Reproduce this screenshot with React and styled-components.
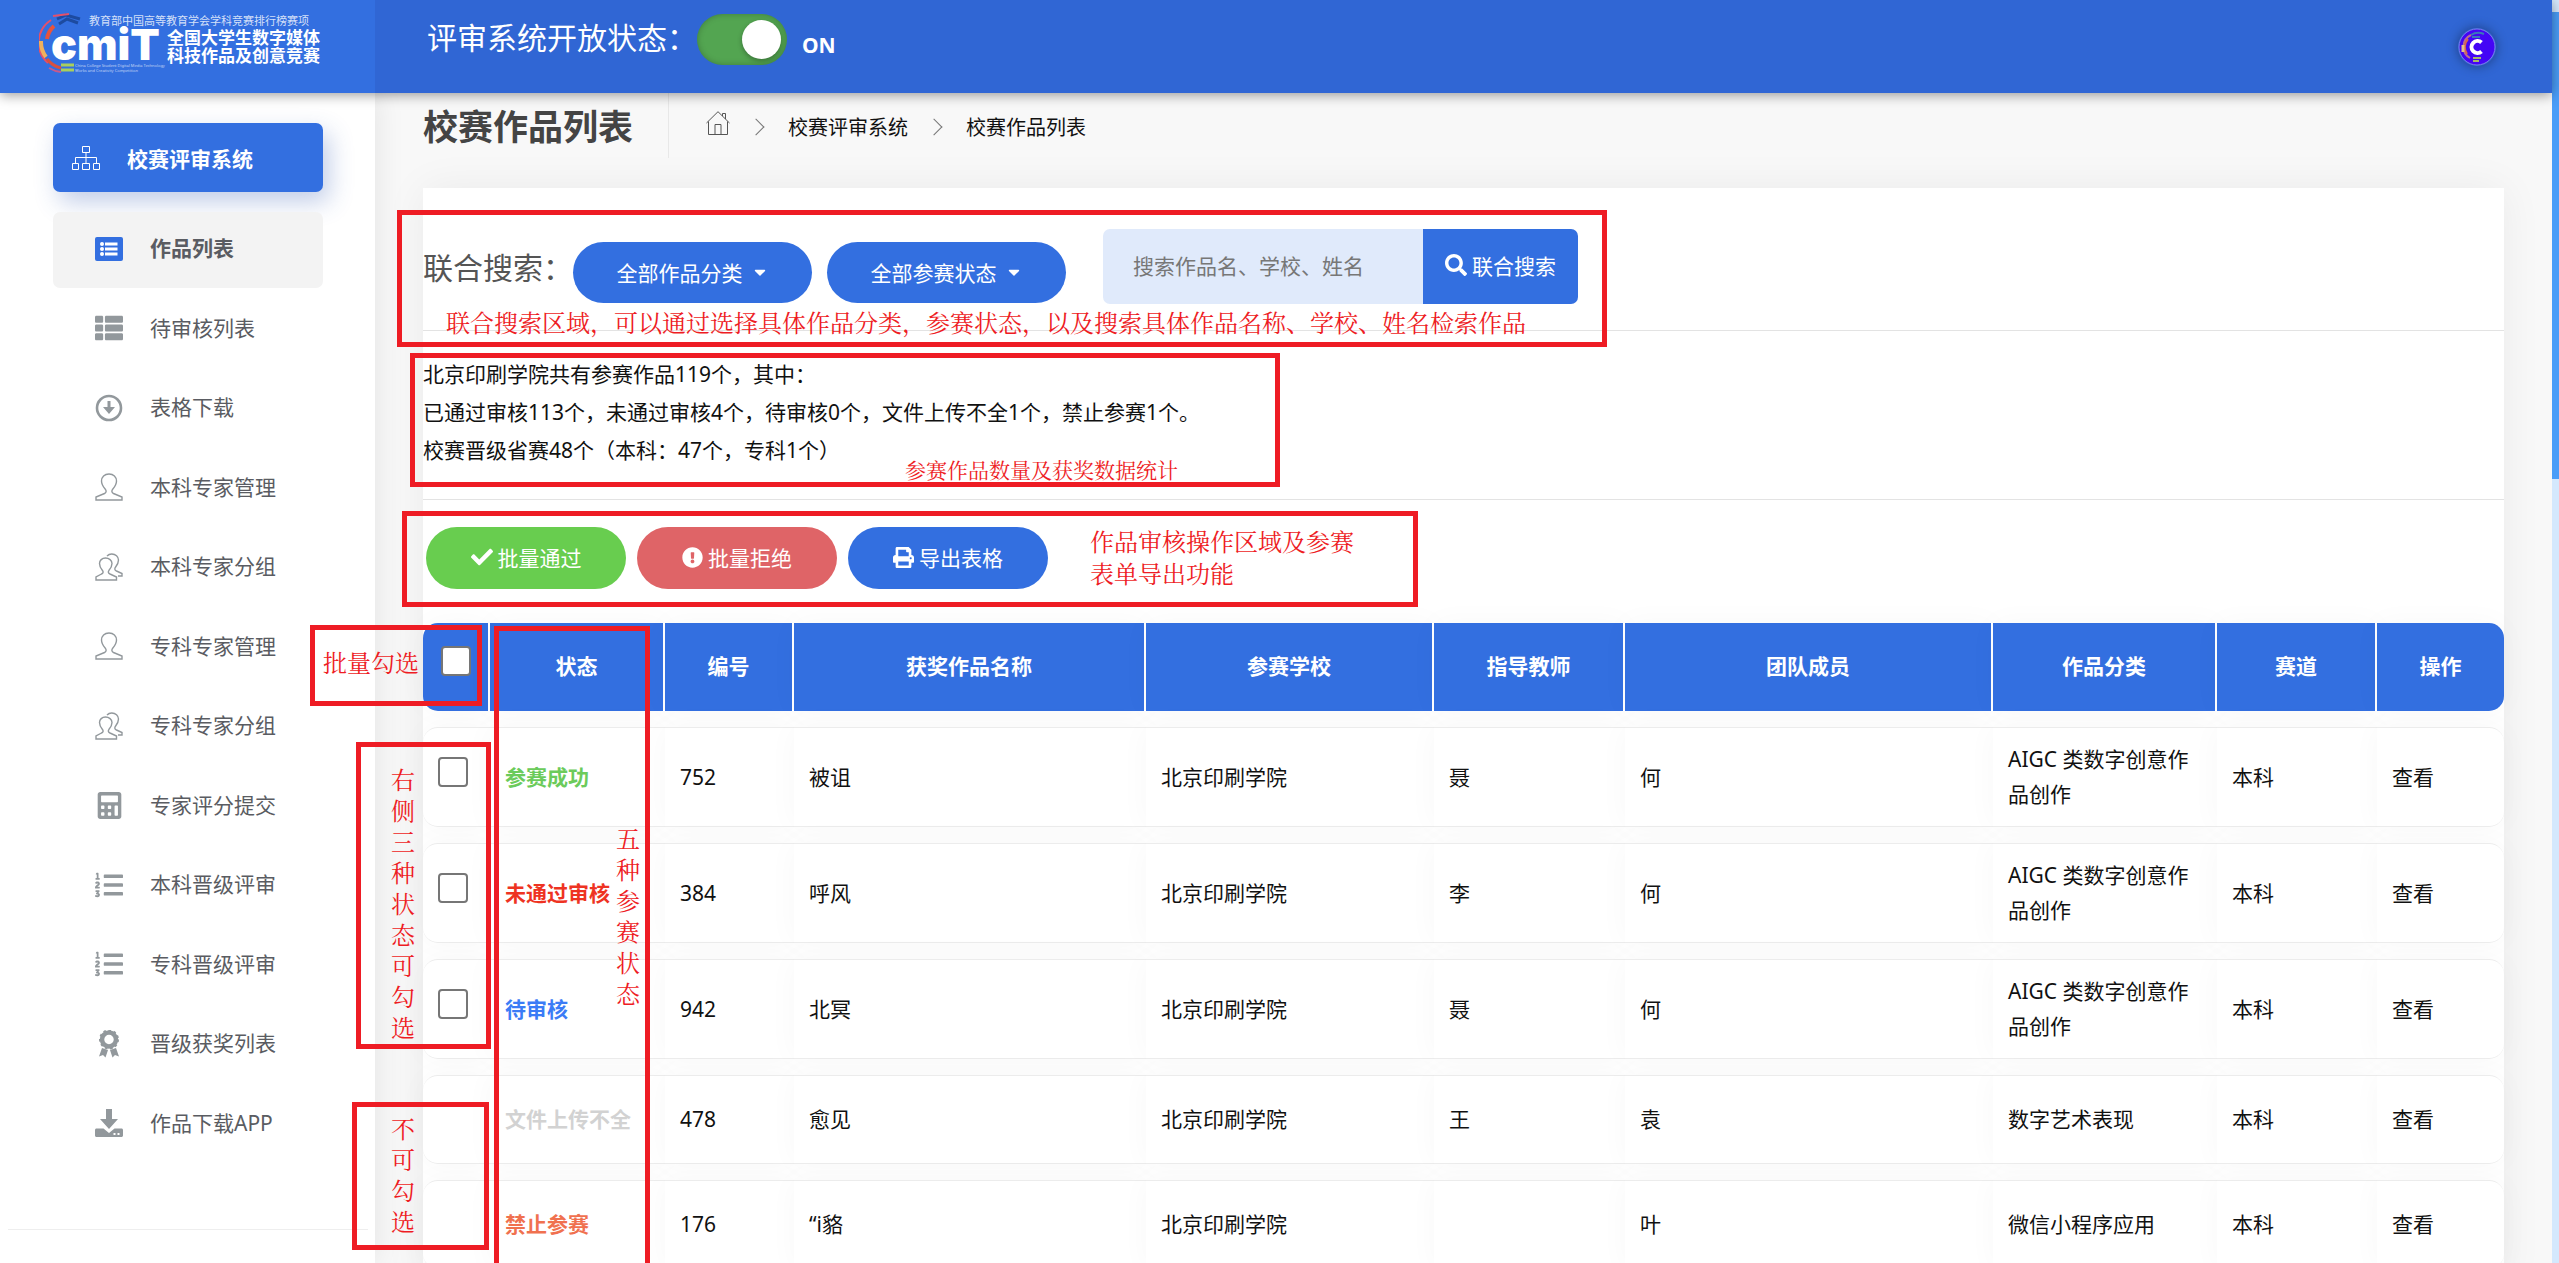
import React, { useState } from 'react';
import styled, { createGlobalStyle } from 'styled-components';
import {
  FaCalculator,
  FaCaretDown,
  FaCheck,
  FaExclamationCircle,
  FaListOl,
  FaPrint,
  FaSearch,
  FaThList,
} from 'react-icons/fa';

const menus = [
  { label: '作品列表', icon: 'listAlt' },
  { label: '待审核列表', icon: 'thList' },
  { label: '表格下载', icon: 'circleDown' },
  { label: '本科专家管理', icon: 'user' },
  { label: '本科专家分组', icon: 'users' },
  { label: '专科专家管理', icon: 'user' },
  { label: '专科专家分组', icon: 'users' },
  { label: '专家评分提交', icon: 'calculator' },
  { label: '本科晋级评审', icon: 'listOl' },
  { label: '专科晋级评审', icon: 'listOl' },
  { label: '晋级获奖列表', icon: 'award' },
  { label: '作品下载APP', icon: 'download' },
];

const columns = [
  { title: '状态', width: 175 },
  { title: '编号', width: 129 },
  { title: '获奖作品名称' },
  { title: '参赛学校', width: 288 },
  { title: '指导教师', width: 191 },
  { title: '团队成员', width: 368 },
  { title: '作品分类', width: 224 },
  { title: '赛道', width: 160 },
  { title: '操作', width: 127 },
];

const works = [
  {
    id: 752,
    status: '参赛成功',
    color: '#6bcb5b',
    name: '被诅',
    teacher: '聂',
    team: '何',
    category: 'AIGC 类数字创意作品创作',
    selectable: true,
  },
  {
    id: 384,
    status: '未通过审核',
    color: '#ee3322',
    name: '呼风',
    teacher: '李',
    team: '何',
    category: 'AIGC 类数字创意作品创作',
    selectable: true,
  },
  {
    id: 942,
    status: '待审核',
    color: '#3b7cf6',
    name: '北冥',
    teacher: '聂',
    team: '何',
    category: 'AIGC 类数字创意作品创作',
    selectable: true,
  },
  {
    id: 478,
    status: '文件上传不全',
    color: '#d2d2d2',
    name: '愈见',
    teacher: '王',
    team: '袁',
    category: '数字艺术表现',
  },
  {
    id: 176,
    status: '禁止参赛',
    color: '#f0714f',
    name: '“i貉',
    teacher: '',
    team: '叶',
    category: '微信小程序应用',
  },
];

const frames = [
  { left: 397, top: 210, width: 1210, height: 137 },
  { left: 410, top: 353, width: 870, height: 134 },
  { left: 402, top: 511, width: 1016, height: 96 },
  { left: 310, top: 625, width: 172, height: 81 },
  { left: 494, top: 626, width: 156, height: 700 },
  { left: 356, top: 742, width: 135, height: 307 },
  { left: 352, top: 1102, width: 137, height: 148 },
];

const notes = [
  {
    left: 446,
    top: 306,
    text: '联合搜索区域，可以通过选择具体作品分类，参赛状态，以及搜索具体作品名称、学校、姓名检索作品',
  },
  { left: 905, top: 453, small: true, text: '参赛作品数量及获奖数据统计' },
  { left: 1090, top: 525, width: 270, text: '作品审核操作区域及参赛表单导出功能' },
  { left: 323, top: 646, text: '批量勾选' },
  { left: 391, top: 763, width: 24, text: '右侧三种状态可勾选' },
  { left: 616, top: 822, width: 24, text: '五种参赛状态' },
  { left: 391, top: 1112, width: 24, text: '不可勾选' },
];

const Icon = ({ name }) => {
  const line = { fill: 'none', stroke: 'currentColor', strokeWidth: 1.4 };
  switch (name) {
    case 'listAlt':
      return (
        <svg width="28" height="24" viewBox="0 0 28 24" fill="#336fe0">
          <rect width="28" height="24" rx="2" />
          <g fill="#fff">
            <circle cx="7" cy="7" r="2" />
            <circle cx="7" cy="12" r="2" />
            <circle cx="7" cy="17" r="2" />
            <path d="M10 5.500h12.500v3H10zM10 10.500h12.500v3H10zM10 15.500h12.500v3H10z" />
          </g>
        </svg>
      );
    case 'thList':
      return <FaThList size={28} />;
    case 'circleDown':
      return (
        <svg width="28" height="28" viewBox="0 0 28 28" fill="currentColor">
          <circle {...line} strokeWidth="2.6" cx="14" cy="14" r="12" />
          <path d="M12.500 7h3v6h4.500l-6 7-6-7h4.500z" />
        </svg>
      );
    case 'user':
      return (
        <svg width="28" height="28" viewBox="0 0 28 28" {...line}>
          <path d="M1 27v-3l8.500-3.500c2-1 2-2.500.8-4.300C8 13.500 6.500 11 6.500 8c0-4 3-7 7.500-7s7.500 3 7.500 7c0 3-1.500 5.500-3.800 8.200-1.200 1.800-1.200 3.300.8 4.300L27 24v3z" />
        </svg>
      );
    case 'users':
      return (
        <svg width="28" height="28" viewBox="0 0 28 28" {...line}>
          <path d="M1 27v-3l5.500-3c2-1 2-2.200.8-3.700C5.500 15 4.500 13 4.500 10.500 4.500 7.500 7 5 10.500 5s6.500 2.500 6.500 5.500c0 2.500-1 4.500-3 6.800-1 1.500-1 2.700 1 3.700l6.500 3v3z" />
          <path d="M12 3c1.200-1.300 3-2 4.800-2C20.500 1 23.500 3.600 23.500 7c0 2.800-1.200 5-3 7.200-1 1.500-1 2.800 1 3.800l5.500 2.500V23H23" />
        </svg>
      );
    case 'calculator':
      return <FaCalculator size={27} />;
    case 'listOl':
      return <FaListOl size={28} />;
    case 'award':
      return (
        <svg width="22" height="28" viewBox="0 0 22 28" fill="currentColor">
          <circle {...line} strokeWidth="4.500" cx="11" cy="9.500" r="7" />
          <circle
            {...line}
            strokeWidth="2"
            strokeDasharray="2.600 2.600"
            cx="11"
            cy="9.500"
            r="9"
          />
          <path d="M4 18l6 2-2.500 7.500-2.500-2.500L1 26.500zM18 18l-6 2 2.500 7.500 2.500-2.500 4 1.500z" />
        </svg>
      );
    default:
      return (
        <svg width="28" height="28" viewBox="0 0 28 28" fill="currentColor">
          <path d="M11 0h6v10h6l-9 10-9-10h6z" />
          <path
            fillRule="evenodd"
            d="M1.500 19.500h7l5.500 4.500 5.500-4.500h7c.8 0 1.500.7 1.500 1.500v5.500c0 .8-.7 1.500-1.500 1.500h-25C.7 28 0 27.300 0 26.500V21c0-.8.7-1.500 1.500-1.500zM18.500 24v2h2v-2zM22.500 24v2h2v-2z"
          />
        </svg>
      );
  }
};

const Logo = () => (
  <svg width="284" height="62" viewBox="0 0 284 62" role="img">
    <g fill="none">
      <path d="M12 7A27 27 0 0 0 9 50" stroke="#e4506a" strokeWidth="2" />
      <path d="M15 13A22 22 0 0 0 8 26" stroke="#e8543c" strokeWidth="4" />
      <path d="M2 28A25 25 0 0 0 7 44" stroke="#f0b15c" strokeWidth="4" />
      <path d="M8 46A24 24 0 0 0 22 55" stroke="#d9503f" strokeWidth="3" />
      <path d="M10 55A29 29 0 0 0 22 59" stroke="#c85a8a" strokeWidth="2" />
      <path d="M18 6l9-4 14 4M20 11l8-5 11 4" stroke="#1d4ba0" strokeWidth="3" />
      <path d="M22 52h13M22 57h13" stroke="#a9cf5c" strokeWidth="3" />
      <path d="M14 3L30 1" stroke="#e4506a" strokeWidth="2" />
    </g>
    <g fill="#fff">
      <text x="12" y="47" fontFamily="Inter" fontWeight="900" fontSize="43">
        cmiT
      </text>
      <text x="50" y="12" fontSize="11" fillOpacity="0.8">
        教育部中国高等教育学会学科竞赛排行榜赛项
      </text>
      <text x="128" y="31" fontWeight="700" fontSize="17">
        全国大学生数字媒体
      </text>
      <text x="128" y="49" fontWeight="700" fontSize="17">
        科技作品及创意竞赛
      </text>
      <g fontSize="4" fillOpacity="0.7">
        <text x="36" y="54">China College Student Digital Media Technology</text>
        <text x="36" y="59">Works and Creativity Competition</text>
      </g>
    </g>
  </svg>
);

const App = () => {
  const [isOpen, setIsOpen] = useState(true);

  return (
    <Screen>
      <GlobalStyle />
      <Page>
        <Header>
          <Brand href="#">
            <Logo />
          </Brand>
          <HeaderBar>
            <SwitchLabel>
              评审系统开放状态：
              <Switch
                type="checkbox"
                checked={isOpen}
                onChange={() => setIsOpen(!isOpen)}
              />
            </SwitchLabel>
            <SwitchState>{isOpen ? 'ON' : 'OFF'}</SwitchState>
            <Avatar type="button" aria-label="账户">
              <svg width="38" height="38" viewBox="0 0 38 38" fill="none">
                <circle cx="19" cy="19" r="18" fill="#4405f5" stroke="#7a7fe8" />
                <path d="M13 7A13 13 0 0 0 12 30" stroke="#b9708f" strokeWidth="2" />
                <path d="M10 11A12 12 0 0 0 9 26" stroke="#d8664f" strokeWidth="2" />
                <path d="M5 17v7" stroke="#e0c08a" strokeWidth="3" />
                <path d="M13 7q6-4 13-1M14 9h8" stroke="#3a78b8" strokeWidth="2" />
                <path d="M15 30h8M15 33h6" stroke="#a5b86a" strokeWidth="2" />
                <path d="M23.500 14.500A6 6 0 1 0 23.500 23.500" stroke="#fff" strokeWidth="4" />
              </svg>
            </Avatar>
          </HeaderBar>
        </Header>

        <Body>
          <Sidebar>
            <SystemLink href="#">
              <svg
                width="28"
                height="26"
                viewBox="0 0 28 26"
                fill="none"
                stroke="currentColor"
              >
                <path d="M10.500 1.500h7v6h-7zM.5 18.500h6v6h-6zM10.500 18.500h7v6h-7zM21.500 18.500h6v6h-6zM14 7.500v11M3.500 18.500v-6h21v6" />
              </svg>
              校赛评审系统
            </SystemLink>
            <Menu>
              {menus.map(({ label, icon }, i) => (
                <li key={label}>
                  <MenuLink href="#" $active={i === 0}>
                    <MenuIcon>
                      <Icon name={icon} />
                    </MenuIcon>
                    {label}
                  </MenuLink>
                </li>
              ))}
            </Menu>
          </Sidebar>

          <Main>
            <TitleBar>
              <Title>校赛作品列表</Title>
              <Breadcrumb>
                <a href="#" aria-label="首页">
                  <svg
                    width="24"
                    height="25"
                    viewBox="0 0 24 25"
                    fill="none"
                    stroke="#555"
                  >
                    <path d="M.5 12L12 .7 23.500 12M2.500 10.500v13h19v-13M9 23.500v-10h6v10M16.500 5V2.500h3v5.500" />
                  </svg>
                </a>
                <Chevron />
                <a href="#">校赛评审系统</a>
                <Chevron />
                <a href="#">校赛作品列表</a>
              </Breadcrumb>
            </TitleBar>

            <Panel>
              <SearchRow>
                <SearchTitle>联合搜索：</SearchTitle>
                <PillGroup>
                  <Pill type="button">
                    全部作品分类
                    <FaCaretDown size={18} />
                  </Pill>
                  <Pill type="button">
                    全部参赛状态
                    <FaCaretDown size={18} />
                  </Pill>
                </PillGroup>
                <SearchInput
                  type="text"
                  aria-label="联合搜索"
                  placeholder="搜索作品名、学校、姓名"
                />
                <SearchButton type="button">
                  <FaSearch size={22} />
                  联合搜索
                </SearchButton>
              </SearchRow>

              <Summary>
                <p>北京印刷学院共有参赛作品119个，其中：</p>
                <p>
                  已通过审核113个，未通过审核4个，待审核0个，文件上传不全1个，禁止参赛1个。
                </p>
                <p>校赛晋级省赛48个（本科：47个，专科1个）</p>
              </Summary>

              <Actions>
                <ActionButton type="button" $color="#68cd4f">
                  <FaCheck size={22} />
                  批量通过
                </ActionButton>
                <ActionButton type="button" $color="#df6467">
                  <FaExclamationCircle size={21} />
                  批量拒绝
                </ActionButton>
                <ActionButton type="button" $color="#336fe0">
                  <FaPrint size={21} />
                  导出表格
                </ActionButton>
              </Actions>

              <Table>
                <colgroup>
                  <Col $width={67} />
                  {columns.map(({ title, width }) => (
                    <Col key={title} $width={width} />
                  ))}
                </colgroup>
                <thead>
                  <tr>
                    <th>
                      <Checkbox type="checkbox" aria-label="批量勾选" />
                    </th>
                    {columns.map(({ title }) => (
                      <th key={title}>{title}</th>
                    ))}
                  </tr>
                </thead>
                <tbody>
                  {works.map((work) => (
                    <tr key={work.id}>
                      <td>
                        {work.selectable && (
                          <Checkbox type="checkbox" aria-label={work.name} />
                        )}
                      </td>
                      <td>
                        <Status $color={work.color}>{work.status}</Status>
                      </td>
                      <td>{work.id}</td>
                      <td>{work.name}</td>
                      <td>北京印刷学院</td>
                      <td>{work.teacher}</td>
                      <td>{work.team}</td>
                      <td>{work.category}</td>
                      <td>本科</td>
                      <td>
                        <a href="#">查看</a>
                      </td>
                    </tr>
                  ))}
                </tbody>
              </Table>
            </Panel>
          </Main>
        </Body>
      </Page>
      <ScrollTrack>
        <ScrollThumb />
      </ScrollTrack>

      {frames.map((frame) => (
        <Frame key={`${frame.left}-${frame.top}`} {...toPlace(frame)} />
      ))}
      {notes.map((note) => (
        <Note key={note.text} {...toPlace(note)} $small={note.small}>
          {note.text}
        </Note>
      ))}
    </Screen>
  );
};

const toPlace = ({ left, top, width, height }) => ({
  $left: left,
  $top: top,
  $width: width,
  $height: height,
});

const GlobalStyle = createGlobalStyle`
  * {
    box-sizing: border-box;
  }

  body {
    margin: 0;
    background: #f8f8f8;
    color: #111;
    font-family: 'Noto Sans', 'Noto Sans CJK SC', sans-serif;
    font-size: 21px;
    font-weight: 400;
  }

  button,
  input {
    font: inherit;
  }

  a {
    color: inherit;
    text-decoration: none;
  }
`;

const Screen = styled.div`
  position: relative;
  display: flex;
  height: 100vh;
  overflow: hidden;
`;

const Page = styled.div`
  flex: 1;
  display: flex;
  flex-direction: column;
  min-width: 0;
`;

const Header = styled.header`
  position: relative;
  z-index: 2;
  display: flex;
  flex: none;
  height: 93px;
  color: #fff;
  box-shadow: 0 2px 12px rgba(0, 0, 0, 0.4);
`;

const Brand = styled.a`
  flex: none;
  width: 375px;
  padding: 13px 0 0 39px;
  background: #336fe0;
`;

const HeaderBar = styled.div`
  flex: 1;
  display: flex;
  align-items: flex-start;
  padding: 14px 56px 0 52px;
  background: #3066d4;
`;

const SwitchLabel = styled.label`
  display: flex;
  align-items: flex-start;
  font-size: 30px;
  line-height: 48px;
`;

const Switch = styled.input`
  appearance: none;
  width: 90px;
  height: 51px;
  margin: 0;
  padding: 6px;
  border-radius: 26px;
  background: #53a551;
  box-shadow: inset 0 0 6px rgba(0, 0, 0, 0.25);

  &::before {
    content: '';
    display: block;
    width: 39px;
    height: 39px;
    margin-left: ${({ checked }) => (checked ? '39px' : '0')};
    border-radius: 50%;
    background: #fff;
    box-shadow: 0 2px 5px rgba(0, 0, 0, 0.3);
  }
`;

const SwitchState = styled.span`
  margin: 16px 0 0 15px;
  font-weight: 700;
  line-height: 30px;
`;

const Avatar = styled.button`
  display: flex;
  margin: 14px 0 0 auto;
  padding: 0;
  border: 0;
  border-radius: 50%;
  background: none;
  box-shadow: 0 0 12px rgba(0, 0, 0, 0.4);
`;

const Body = styled.div`
  flex: 1;
  display: flex;
  min-height: 0;
`;

const Sidebar = styled.aside`
  flex: none;
  width: 375px;
  padding: 30px 52px 0 53px;
  background: #fff;
  box-shadow: 0 0 30px rgba(0, 0, 0, 0.09);
`;

const SystemLink = styled.a`
  display: flex;
  align-items: center;
  gap: 27px;
  height: 69px;
  margin-bottom: 20px;
  padding-left: 19px;
  border-radius: 7px;
  background: #336fe0;
  color: #fff;
  font-weight: 700;
  box-shadow: 6px 10px 24px rgba(51, 90, 180, 0.3);
`;

const Menu = styled.ul`
  display: flex;
  flex-direction: column;
  gap: 4px;
  margin: 0 -45px;
  padding: 0 45px 67px;
  border-bottom: 1px solid #eee;
  list-style: none;
`;

const MenuLink = styled.a`
  display: flex;
  align-items: center;
  gap: 27px;
  padding: 21px 0 23px 42px;
  border-radius: 7px;
  background: ${({ $active }) => ($active ? '#f3f3f3' : 'none')};
  color: #5a5c62;
  font-weight: ${({ $active }) => ($active ? 700 : 400)};
  line-height: 1.5;
`;

const MenuIcon = styled.span`
  display: flex;
  justify-content: center;
  align-items: center;
  width: 28px;
  height: 28px;
  color: #92989c;
`;

const Main = styled.main`
  flex: 1;
  min-width: 0;
  padding: 0 48px;
`;

const TitleBar = styled.div`
  display: flex;
  height: 95px;
`;

const Title = styled.h1`
  height: 65px;
  margin: 0;
  padding-right: 35px;
  border-right: 1px solid #e8e8e8;
  color: #444;
  font-size: 35px;
  font-weight: 700;
  line-height: 67px;
`;

const Breadcrumb = styled.nav`
  display: flex;
  align-items: center;
  gap: 23px;
  height: 67px;
  margin-left: 37px;
  font-size: 20px;
`;

const Chevron = styled.i`
  width: 12px;
  height: 12px;
  margin: 0 3px 0 -3px;
  border: solid #777;
  border-width: 1px 1px 0 0;
  transform: rotate(45deg);
`;

const Panel = styled.section`
  background: #fff;
  box-shadow: 0 0 40px rgba(0, 0, 0, 0.06);
`;

const SearchRow = styled.div`
  display: flex;
  align-items: center;
  height: 143px;
  padding-top: 14px;
  border-bottom: 1px solid #e3e3e3;
`;

const SearchTitle = styled.h2`
  width: 150px;
  margin: 0;
  color: #555;
  font-size: 30px;
  font-weight: 400;
`;

const PillGroup = styled.div`
  display: flex;
  gap: 15px;
  margin-right: 37px;
  padding-top: 12px;
`;

const Pill = styled.button`
  display: flex;
  justify-content: center;
  align-items: center;
  gap: 8px;
  width: 239px;
  height: 61px;
  border: 0;
  border-radius: 31px;
  background: #336fe0;
  color: #fff;
`;

const SearchInput = styled.input`
  width: 320px;
  height: 75px;
  padding: 0 30px;
  border: 0;
  border-radius: 7px 0 0 7px;
  background: #e0eafb;

  &::placeholder {
    color: #777;
  }
`;

const SearchButton = styled.button`
  display: flex;
  justify-content: center;
  align-items: center;
  gap: 5px;
  width: 155px;
  height: 75px;
  padding: 0 0 2px;
  border: 0;
  border-radius: 0 7px 7px 0;
  background: #336fe0;
  color: #fff;
`;

const Summary = styled.div`
  height: 169px;
  padding-top: 24px;
  border-bottom: 1px solid #e3e3e3;
  line-height: 38px;

  p {
    margin: 0;
  }
`;

const Actions = styled.div`
  display: flex;
  gap: 11px;
  padding: 27px 3px 34px;
`;

const ActionButton = styled.button`
  display: flex;
  justify-content: center;
  align-items: center;
  gap: 5px;
  width: 200px;
  height: 62px;
  padding: 0 0 2px;
  border: 0;
  border-radius: 31px;
  background: ${({ $color }) => $color};
  color: #fff;
`;

const Table = styled.table`
  width: 100%;
  margin-top: -16px;
  border-collapse: separate;
  border-spacing: 0 16px;
  table-layout: fixed;
  line-height: 35px;

  th,
  td {
    box-shadow: 0 0 30px rgba(0, 0, 0, 0.03);
  }

  th {
    height: 88px;
    padding: 0 0 2px;
    border-right: 2px solid #fff;
    background: #336fe0;
    color: #fff;
    font-weight: 700;
  }

  td {
    height: 89px;
    padding: 14px 15px;
    border: solid #ececec;
    border-width: 1px 0;
    background: #fff;
  }

  th:first-child,
  td:first-child {
    border-radius: 15px 0 0 15px;
  }

  th:last-child,
  td:last-child {
    border-right-width: 0;
    border-radius: 0 15px 15px 0;
  }
`;

const Col = styled.col`
  width: ${({ $width }) => ($width ? `${$width}px` : 'auto')};
`;

const Checkbox = styled.input`
  appearance: none;
  display: inline-block;
  width: 30px;
  height: 30px;
  margin: 0 0 10px;
  border: 2px solid #767676;
  border-radius: 4px;
  background: #fff;
  vertical-align: middle;

  &:checked {
    background: #336fe0;
  }
`;

const Status = styled.span`
  color: ${({ $color }) => $color};
  font-weight: 700;
  white-space: nowrap;
`;

const ScrollTrack = styled.div`
  flex: none;
  width: 7px;
  padding-top: 12px;
  background: #d4e8fd;
`;

const ScrollThumb = styled.div`
  height: 467px;
  background: #4a9df8;
`;

const Overlay = styled.div`
  position: absolute;
  z-index: 3;
  left: ${({ $left }) => $left}px;
  top: ${({ $top }) => $top}px;
  width: ${({ $width }) => ($width ? `${$width}px` : 'max-content')};
  pointer-events: none;
`;

const Frame = styled(Overlay)`
  height: ${({ $height }) => $height}px;
  border: 5px solid #ee1c24;
`;

const Note = styled(Overlay)`
  color: #ee1c24;
  font-family: 'Noto Serif CJK SC', 'Noto Sans CJK SC', serif;
  font-size: ${({ $small }) => ($small ? 21 : 24)}px;
  line-height: ${({ $width }) => ($width === 24 ? 31 : 32)}px;
`;

export default App;
